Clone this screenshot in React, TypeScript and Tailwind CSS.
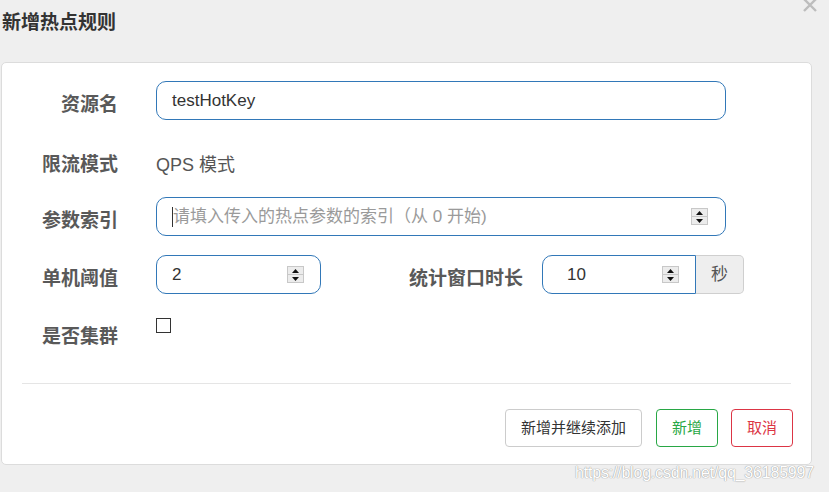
import React from "react";

const font = { fontFamily: '"Liberation Sans", "Noto Sans CJK SC", sans-serif' };

function Spinner() {
  return (
    <span className="flex flex-col w-[17px] h-[17px] border border-[#c8c8c8] bg-[#ececec]">
      <span className="flex-1 flex items-center justify-center border-b border-[#c8c8c8]">
        <svg width="7" height="4" viewBox="0 0 7 4">
          <path d="M0 4 L3.5 0 L7 4 Z" fill="#111" />
        </svg>
      </span>
      <span className="flex-1 flex items-center justify-center">
        <svg width="7" height="4" viewBox="0 0 7 4">
          <path d="M0 0 L3.5 4 L7 0 Z" fill="#111" />
        </svg>
      </span>
    </span>
  );
}

function Label({ children, className = "" }: { children: React.ReactNode; className?: string }) {
  return (
    <div className={"shrink-0 text-right pt-[12px] text-[19px] leading-6 font-bold text-[#595959] " + className}>
      {children}
    </div>
  );
}

export default function App() {
  return (
    <div className="relative w-[829px] h-[492px] overflow-hidden bg-[#efefef]" style={font}>
      {/* close */}
      <svg className="absolute left-[803px] top-[-2px]" width="14" height="14" viewBox="0 0 14 14">
        <path d="M1 1 L13 13 M13 1 L1 13" stroke="#bdbdbd" strokeWidth="2.4" />
      </svg>

      <h4 className="pl-[2px] pt-[11px] text-[19px] leading-6 font-bold text-[#333]">新增热点规则</h4>

      <div className="ml-[1px] mt-[27px] w-[811px] h-[403px] bg-white border border-[#dcdcdc] rounded-[5px] pt-[18px]">
        {/* 资源名 */}
        <div className="flex h-[39px] mb-[19px]">
          <Label className="w-[116px]">资源名</Label>
          <div className="ml-[38px] w-[570px] h-[39px] border border-[#3278b8] rounded-[10px] flex items-center px-[15px] text-[17px] text-[#333]">
            testHotKey
          </div>
        </div>

        {/* 限流模式 */}
        <div className="flex h-[39px] mb-[19px]">
          <Label className="w-[116px] pt-[14px]">限流模式</Label>
          <div className="ml-[38px] pt-[14px] text-[18px] leading-6 text-[#555]">QPS 模式</div>
        </div>

        {/* 参数索引 */}
        <div className="flex h-[39px] mb-[19px]">
          <Label className="w-[116px]">参数索引</Label>
          <div className="ml-[38px] w-[570px] h-[39px] border border-[#3278b8] rounded-[10px] flex items-center pl-[15px] pr-[17px] text-[17px]">
            <span className="w-px h-[20px] bg-[#333]" />
            <span className="flex-1 text-[#9a9a9a]">请填入传入的热点参数的索引（从 0 开始)</span>
            <Spinner />
          </div>
        </div>

        {/* 单机阈值 / 统计窗口时长 */}
        <div className="flex h-[39px] mb-[19px]">
          <Label className="w-[116px]">单机阈值</Label>
          <div className="ml-[38px] w-[165px] h-[39px] border border-[#3278b8] rounded-[10px] flex items-center pl-[15px] pr-[16px] text-[17px] text-[#333]">
            <span className="flex-1">2</span>
            <Spinner />
          </div>
          <Label className="w-[202px]">统计窗口时长</Label>
          <div className="ml-[19px] flex h-[39px]">
            <div className="w-[154px] h-[39px] border border-[#3278b8] rounded-l-[10px] flex items-center pl-[24px] pr-[16px] text-[17px] text-[#333]">
              <span className="flex-1">10</span>
              <Spinner />
            </div>
            <div className="w-[48px] h-[39px] border border-l-0 border-[#cfcfcf] bg-[#eeeeee] rounded-r-[5px] flex items-center justify-center text-[17px] text-[#555]">
              秒
            </div>
          </div>
        </div>

        {/* 是否集群 */}
        <div className="flex h-[39px]">
          <Label className="w-[116px]">是否集群</Label>
          <div className="ml-[38px] pt-[5px]">
            <span className="block w-[15px] h-[15px] border border-[#333] bg-white" />
          </div>
        </div>

        <div className="mx-[20px] mt-[31px] h-px bg-[#e5e5e5]" />

        <div className="flex justify-end pr-[18px] mt-[25px] text-[15px]">
          <button className="h-[38px] w-[137px] border border-[#cccccc] rounded-[4px] text-[#333] bg-white">
            新增并继续添加
          </button>
          <button className="ml-[14px] h-[38px] w-[62px] border border-[#28a745] rounded-[4px] text-[#28a745] bg-white">
            新增
          </button>
          <button className="ml-[13px] h-[38px] w-[62px] border border-[#dc3545] rounded-[4px] text-[#dc3545] bg-white">
            取消
          </button>
        </div>
      </div>

      {/* watermark */}
      <div
        className="absolute left-[575px] top-[463px] text-[16px] leading-5 text-white tracking-[-0.2px]"
        style={{ textShadow: "0 0 1px #9a9a9a, 0 0 1px #9a9a9a" }}
      >
        https://blog.csdn.net/qq_36185997
      </div>
    </div>
  );
}
